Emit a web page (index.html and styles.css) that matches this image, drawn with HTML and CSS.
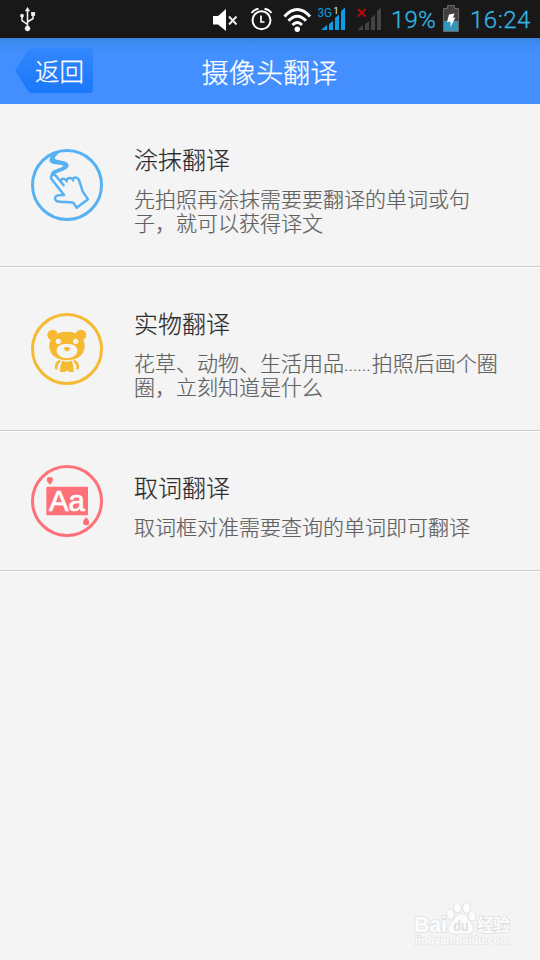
FILE: index.html
```html
<!DOCTYPE html>
<html lang="zh-CN">
<head>
<meta charset="utf-8">
<title>摄像头翻译</title>
<link rel="stylesheet" href="styles.css">
</head>
<body>
<div class="screen">
  <div class="status">
    <svg class="usb" width="18" height="28" viewBox="19 5 18 28" fill="#f4f4f4" stroke="#f4f4f4" stroke-width="1.5"><path d="M27.5 28V10M27.5 24.5L22 20.5V16M27.5 22L33 18.500V14.500" fill="none"/><path d="M27.500 7.500L29.500 11H25.500Z" stroke-width="0.700"/><circle cx="27.500" cy="28.500" r="2.400" stroke-width="0.700"/><circle cx="22" cy="15.700" r="1.600" stroke-width="0.600"/><rect x="31.500" y="12.300" width="3.300" height="3.300" stroke-width="0.600"/></svg>
    <svg class="signals" width="172" height="38" viewBox="210 0 172 38" fill="none">
      <path d="M213 16H218L226 9V31L218 24.500H213Z" fill="#fff"/>
      <path d="M229 16.500L236.500 24.500M236.500 16.500L229 24.500" stroke="#eee" stroke-width="1.900"/>
      <circle cx="261.500" cy="20.300" r="9" stroke="#fff" stroke-width="2"/>
      <path d="M261 15.500V22H264.500" stroke="#fff" stroke-width="1.700"/>
      <path d="M251.500 13Q254 9.500 258.500 8.800M264.500 8.800Q269 9.500 271.500 13" stroke="#fff" stroke-width="2"/>
      <path d="M284.500 16.500Q297.300 2.700 310 16.500M288.500 20.800Q297.300 11.500 306 20.800M292.500 25Q297.300 20 302 25" stroke="#fff" stroke-width="3"/>
      <circle cx="297.300" cy="29.300" r="2.700" fill="#fff"/>
      <path d="M321 30L327 25V30ZM329 24L333 21V30H329ZM335 18L339 14.500V30H335ZM341 11L345 7.500V30H341Z" fill="#0c9ce3"/>
      <text x="317.500" y="16.500" class="net" textLength="14.500" lengthAdjust="spacingAndGlyphs">3G</text>
      <text x="333.500" y="14" class="sim">1</text>
      <path d="M357.500 30L363 25V30ZM365 24L369 21V30H365ZM371 18L375 14.500V30H371ZM377 11L381 7.500V30H377Z" fill="#444"/>
      <path d="M358 9L365.500 16.500M365.500 9L358 16.500" stroke="#b00c10" stroke-width="2"/>
    </svg>
    <span class="percent">19%</span>
    <svg class="battery" width="16" height="28" viewBox="443 5 16 28"><path d="M443.500 8.500H447.500V5.500H454.500V8.500H458.500V31.500H443.500Z" fill="#443f3f" stroke="#666"/><path d="M444 21H458V31H444Z" fill="#3596bd"/><path d="M449 14.500L454.500 13.500L453 18L455.500 17.500L450.500 27V21.500L447 22Z" fill="#fff"/></svg>
    <span class="clock">16:24</span>
  </div>
  <div class="header">
    <div class="back">
      <svg class="back-shape" width="78" height="45" viewBox="0 0 78 45"><defs><linearGradient id="bg" x2="0" y2="1"><stop stop-color="#3287fb"/><stop offset="1" stop-color="#1b78fb"/></linearGradient></defs><path d="M16 0H75Q78 0 78 3V42Q78 45 75 45H16Q14.500 45 13 43L0 22.500L13 2Q14.500 0 16 0Z" fill="url(#bg)"/></svg>
      <span class="back-label">返回</span>
    </div>
    <div class="title">摄像头翻译</div>
  </div>
  <div class="list">
    <div class="row">
      <svg class="icon" viewBox="33 27 216 216" fill="none" stroke="#56b2f3" stroke-linejoin="round" stroke-linecap="round"><circle cx="141" cy="135" r="103.500" stroke-width="9"/><path d="M94 46L123 32L106 50Q101 57 111 59L132 64Q149 69 145 81Q142 87 132 91L113 98Q104 101 100 108L91 106Q93 94 104 90L124 82Q133 79 128 76L102 72Q88 69 88 60Q88 52 94 46Z" fill="#56b2f3" stroke="none"/><path d="M132 165L95 118Q90 109 98 105Q104 103 110 110L131 136M122 121Q128 111 139 121Q143 110 157 117Q168 107 177 120L188 154L204 178L170 203L160 188C141 185 122 188 110 183Q102 178 107 170Q111 164 132 165" stroke-width="7.500"/><path d="M139 121L141 125M157 117L160 122" stroke-width="6"/></svg>
      <div class="text"><div class="name">涂抹翻译</div><div class="desc">先拍照再涂抹需要要翻译的单词或句<br>子，就可以获得译文</div></div>
    </div>
    <div class="row">
      <svg class="icon" viewBox="33 27 216 216" fill="#f6b932"><circle cx="141" cy="135" r="103.500" fill="none" stroke="#f6b932" stroke-width="9"/><circle cx="98" cy="93" r="16"/><circle cx="183" cy="93" r="16"/><path d="M141 83C174 83 192 100 194 123C196 151 173 169 141 169C109 169 86 151 88 123C90 100 108 83 141 83Z"/><g fill="#f4f4f4"><circle cx="115" cy="112" r="8"/><circle cx="167" cy="112" r="8"/><path d="M141 119C161 119 173 128 172 141C171 154 158 162 141 162C124 162 111 154 110 141C109 128 121 119 141 119Z"/></g><path d="M131 133Q141 125 151 133Q148 142 141 142Q134 142 131 133Z"/><path d="M127 170Q141 176 155 170Q162 185 161 204H147Q146 200 141 200Q136 200 135 204H120Q119 185 127 170Z"/><path d="M118 172Q107 178 109 193M164 172Q175 178 173 193" fill="none" stroke="#f6b932" stroke-width="8" stroke-linecap="round"/></svg>
      <div class="text"><div class="name">实物翻译</div><div class="desc">花草、动物、生活用品<span class="dots">......</span>拍照后画个圈<br>圈，立刻知道是什么</div></div>
    </div>
    <div class="row last">
      <svg class="icon" viewBox="33 27 216 216" fill="#ff7078"><circle cx="141" cy="135" r="103.500" fill="none" stroke="#ff7078" stroke-width="9"/><rect x="79" y="92" width="125" height="86" rx="4"/><path d="M90 86Q80 77 80 71Q80 63 90 63Q99 63 99 71Q99 77 90 86ZM199 184Q208 193 208 200Q207 208 198 208Q189 208 189 199Q189 192 199 184Z"/><text x="87" y="165" class="aa" textLength="108" lengthAdjust="spacingAndGlyphs">Aa</text></svg>
      <div class="text"><div class="name">取词翻译</div><div class="desc">取词框对准需要查询的单词即可翻译</div></div>
    </div>
  </div>
  <svg class="watermark" width="110" height="56" viewBox="408 896 110 56" fill="#fcfcfc" stroke="#e0e0e0" stroke-width="1.600" paint-order="stroke"><text x="414" y="932" class="brand" textLength="33" lengthAdjust="spacingAndGlyphs">Bai</text><ellipse cx="450.500" cy="914" rx="3.300" ry="4.500"/><ellipse cx="457.500" cy="907.500" rx="3.500" ry="5"/><ellipse cx="466.500" cy="908" rx="3.500" ry="5"/><ellipse cx="472" cy="916" rx="3.300" ry="4.500"/><path d="M461 914C467 914 468 920 471 923C476 929 472 934 466 933.500H455C448 934 446 928 451 923C455 920 456 914 461 914Z"/><text x="453.500" y="931" class="du" textLength="15" lengthAdjust="spacingAndGlyphs">du</text><text x="477" y="931" class="exp" textLength="33">经验</text><text x="415" y="944" class="url" textLength="95">jingyan.baidu.com</text></svg>
</div>
</body>
</html>
```
FILE: styles.css
```css
* { box-sizing: border-box; }
body { margin: 0; background: #f4f4f4; font-family: "Noto Sans CJK SC", sans-serif; font-weight: 300; }
.screen { position: relative; width: 540px; height: 960px; overflow: hidden; background: #f4f4f4; }
svg { display: block; flex: none; }
.status { height: 38px; display: flex; align-items: center; background: #181818; color: #33b5e5; font: 400 24px/38px Roboto, sans-serif; white-space: nowrap; }
.usb { margin-left: 19px; }
.signals { margin-left: 173px; }
.percent { margin-left: 9px; width: 45px; letter-spacing: 0.2px; font-weight: 300; padding-top: 2px; -webkit-text-stroke: 0.3px; }
.battery { margin-left: 7px; }
.clock { margin-left: 11px; letter-spacing: 0.5px; font-weight: 300; padding-top: 2px; -webkit-text-stroke: 0.3px; }
.net { font: 400 12px Roboto, sans-serif; fill: #0c9ce3; }
.sim { font: 400 9px Roboto, sans-serif; fill: #fff; }
.header { height: 66px; display: flex; align-items: center; background: linear-gradient(#3b82dc 0, #3d8cf5 6px, #438fff 16px); color: #fff; padding-bottom: 1px; -webkit-text-stroke: 0.25px; }
.back { position: relative; width: 78px; height: 45px; margin-left: 15px; display: flex; align-items: center; }
.back-shape { position: absolute; left: 0; top: 0; }
.back-label { position: relative; margin-left: 20px; font-size: 24.5px; line-height: 45px; white-space: nowrap; }
.title { margin-left: 108.5px; font-size: 27.2px; line-height: 40px; }
.row { height: 164px; display: flex; align-items: center; padding-left: 31px; border-bottom: 1px solid #fff; box-shadow: inset 0 -1px #cbcbcb; padding-bottom: 1px; }
.last { height: 140px; }
.icon { width: 72px; height: 72px; }
.text { align-self: flex-start; margin: 41px 0 0 31px; white-space: nowrap; -webkit-text-stroke: 0.2px; }
.name { font-size: 24px; line-height: 28px; color: #2c2c2c; }
.desc { margin-top: 13px; font-size: 21px; line-height: 24px; color: #606060; }
.dots { letter-spacing: -0.1px; margin-right: 1px; font-family: Roboto, sans-serif; font-size: 19px; line-height: 0; }
.aa { font: 400 86px "Liberation Sans", sans-serif; fill: #fff; stroke: #fff; stroke-width: 2px; }
.watermark { position: absolute; left: 408px; top: 896px; }
.brand { font: 700 22px "Liberation Sans", sans-serif; }
.du { font: 700 14px "Liberation Sans", sans-serif; fill: #dcdcdc; stroke: none; }
.exp { font: 700 17px "Noto Sans CJK SC", sans-serif; }
.url { font: 700 11px "Liberation Sans", sans-serif; stroke-width: 1px; }
```
